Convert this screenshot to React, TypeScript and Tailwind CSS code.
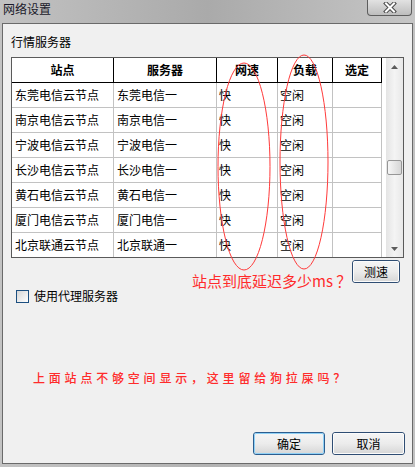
const rows: [string, string][] = [
  ["东莞电信云节点", "东莞电信一"],
  ["南京电信云节点", "南京电信一"],
  ["宁波电信云节点", "宁波电信一"],
  ["长沙电信云节点", "长沙电信一"],
  ["黄石电信云节点", "黄石电信一"],
  ["厦门电信云节点", "厦门电信一"],
  ["北京联通云节点", "北京联通一"],
];

function WinButton({ label, w, isDefault }: { label: string; w: string; isDefault?: boolean }) {
  return (
    <div
      className={
        "h-[23px] rounded-[3px] border flex items-center justify-center " +
        w +
        (isDefault ? " border-[#2b5d8f]" : " border-[#2f4d73]")
      }
    >
      <div
        className={
          "w-full h-full rounded-[2px] border flex items-center justify-center bg-gradient-to-b from-[#f4f4f4] via-[#ececec] to-[#d8d8d8] " +
          (isDefault ? "border-[#8fd0f5]" : "border-[#fbfbfb]")
        }
      >
        <span className="text-[12px] leading-[14px] text-black">{label}</span>
      </div>
    </div>
  );
}

export default function App() {
  return (
    <div className="relative w-[415px] h-[467px] overflow-hidden flex flex-col bg-gradient-to-r from-[#c3c3c3] via-[#b3b3b3] to-[#c2c2c2] font-['Noto_Sans_CJK_SC','Noto_Sans',sans-serif] text-black">
      {/* title bar */}
      <div className="h-[23px] flex justify-between shrink-0 bg-gradient-to-r from-[#c2c2c2] via-[#aaaaaa] to-[#c6c6c6]">
        <div className="pl-[3px] pt-[1px] text-[12px] leading-[16px] text-[#1a1a2a]">网络设置</div>
        <div className="mr-[3px] w-[45px] h-[16px] rounded-b-[4px] border border-t-0 border-[#5d5d5d] bg-gradient-to-b from-[#e2e2e2] to-[#bdbdbd] flex items-center justify-center">
          <svg width="14" height="11" viewBox="0 0 14 11">
            <path d="M3 1.5 L11 9.5 M11 1.5 L3 9.5" stroke="#4a4a4a" strokeWidth="4" strokeLinecap="square" />
            <path d="M3 1.5 L11 9.5 M11 1.5 L3 9.5" stroke="#ffffff" strokeWidth="2" strokeLinecap="square" />
          </svg>
        </div>
      </div>

      {/* client area */}
      <div className="flex-1 ml-[2px] mr-[2px] mb-[3px] border border-[#6a6a6a] bg-[#f0f0f0] flex flex-col">
        <div className="mt-[10px] ml-[8px] text-[12px] leading-[16px]">行情服务器</div>

        {/* table */}
        <div className="mt-[7px] ml-[8px] w-[393px] h-[201px] border border-[#5a5a5a] bg-white flex">
          <div className="w-[370px] flex flex-col">
            <div className="grid grid-cols-[102px_103px_61px_55px_49px] h-[25px]">
              {["站点", "服务器", "网速", "负载", "选定"].map((h) => (
                <div
                  key={h}
                  className="border-r border-b border-black flex items-center justify-center text-[12px] font-bold leading-[14px]"
                >
                  {h}
                </div>
              ))}
            </div>
            {rows.map(([a, b], i) => (
              <div
                key={a}
                className={
                  "grid grid-cols-[102px_103px_61px_55px_49px] " +
                  (i === rows.length - 1 ? "h-[24px]" : "h-[25px]")
                }
              >
                {[a, b, "快", "空闲", ""].map((t, j) => (
                  <div
                    key={j}
                    className={
                      "border-r border-[#c2c2c2] flex items-center text-[12px] leading-[14px] " +
                      (j < 2 ? "pl-[3px] " : "pl-[2px] ") +
                      (i === rows.length - 1 ? "" : "border-b")
                    }
                  >
                    {t}
                  </div>
                ))}
              </div>
            ))}
          </div>
          <div className="w-[4px]" />
          {/* scrollbar */}
          <div className="w-[17px] flex flex-col bg-gradient-to-r from-[#e4e4e4] via-[#f4f4f4] to-[#e8e8e8]">
            <div className="h-[17px] flex items-center justify-center">
              <svg width="7" height="4" viewBox="0 0 7 4">
                <path d="M0 4 L3.5 0 L7 4 Z" fill="#5c5c5c" />
              </svg>
            </div>
            <div className="h-[85px]" />
            <div className="mx-[1px] h-[15px] rounded-[2px] border border-[#969696] bg-gradient-to-r from-[#f6f6f6] to-[#d6d6d6]" />
            <div className="flex-1" />
            <div className="h-[17px] flex items-center justify-center">
              <svg width="7" height="4" viewBox="0 0 7 4">
                <path d="M0 0 L7 0 L3.5 4 Z" fill="#5c5c5c" />
              </svg>
            </div>
          </div>
        </div>

        {/* test button row */}
        <div className="mt-[2px] flex justify-end pr-[12px]">
          <WinButton label="测速" w="w-[48px]" />
        </div>

        {/* proxy checkbox */}
        <div className="mt-[6px] ml-[13px] h-[14px] flex items-center">
          <div className="w-[13px] h-[13px] border border-[#1c4f80] bg-gradient-to-br from-[#d6d6d6] to-[#ffffff]" />
          <span className="ml-[5px] text-[12px] leading-[14px]">使用代理服务器</span>
        </div>

        <div className="mt-[67px] ml-[30px] text-[12px] leading-[16px] tracking-[3.8px] font-medium text-[#ff2b2b] whitespace-nowrap">
          上面站点不够空间显示，这里留给狗拉屎吗？
        </div>

        <div className="mt-auto mb-[8px] pr-[7px] flex justify-end gap-[7px]">
          <WinButton label="确定" w="w-[72px]" isDefault />
          <WinButton label="取消" w="w-[73px]" />
        </div>
      </div>

      {/* red annotations overlay */}
      <svg className="absolute left-0 top-0 pointer-events-none" width="415" height="467" viewBox="0 0 415 467">
        <ellipse cx="244" cy="166.5" rx="26" ry="103.5" fill="none" stroke="#ff3a3a" strokeWidth="1" />
        <ellipse cx="304" cy="162" rx="24" ry="107" fill="none" stroke="#ff3a3a" strokeWidth="1" />
      </svg>
      <div className="absolute left-[192px] top-[272px] text-[15px] leading-[17px] text-[#ff2b2b] whitespace-nowrap">
        站点到底延迟多少ms ？
      </div>
    </div>
  );
}
